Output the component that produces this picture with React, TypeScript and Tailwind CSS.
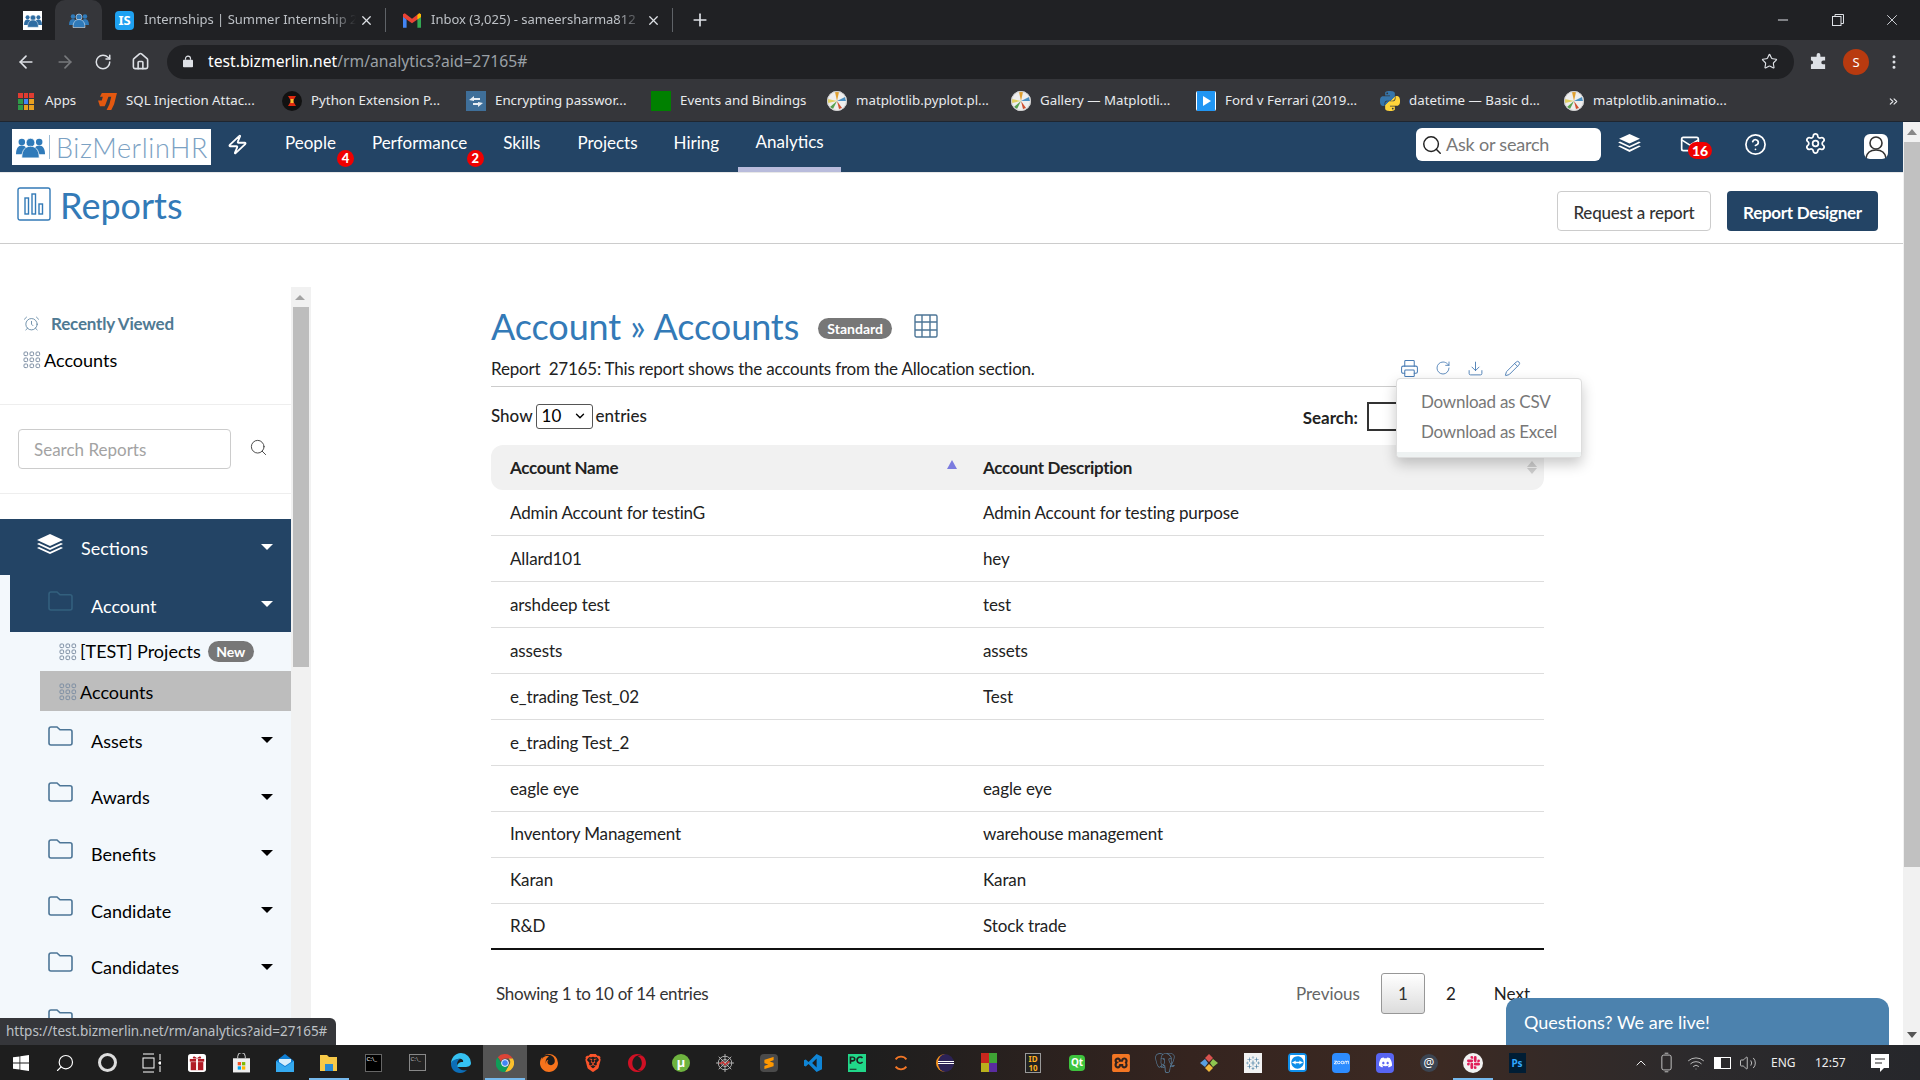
import React from "react";
import { ArrowLeft, ArrowRight, RotateCw, Home, Star, MoreVertical, Search, Zap, Mail, CircleHelp, Settings, Printer, Download, Pencil, X, Plus, Minus, ChevronDown, ChevronUp, ChevronsRight, AlarmClock, Volume2, Wifi } from "lucide-react";
import { SiFirefox, SiBrave, SiOpera, SiSublimetext, SiPycharm, SiPostgresql, SiTableau, SiTeamviewer, SiZoom, SiDiscord, SiSlack, SiXampp, SiPython } from "react-icons/si";

const People = ({ className = "", color = "#2f7ab9" }: { className?: string; color?: string }) => (
  <svg viewBox="0 0 40 32" className={className} fill={color}>
    <circle cx="8" cy="9" r="4.5" /><circle cx="32" cy="9" r="4.5" />
    <path d="M0 26c0-8 3-12 8-12s8 4 8 12z" /><path d="M24 26c0-8 3-12 8-12s8 4 8 12z" />
    <circle cx="20" cy="10" r="6" stroke="#fff" strokeWidth="1" />
    <path d="M8 31c0-11 5-16 12-16s12 5 12 16z" stroke="#fff" strokeWidth="1" />
  </svg>
);

const Matplot = () => (
  <svg viewBox="0 0 20 20" className="w-5 h-5 shrink-0">
    <circle cx="10" cy="10" r="10" fill="#eee" />
    <path d="M10 10L8 1h4z" fill="#e0a030" /><path d="M10 10l8-4 1 4z" fill="#4a90c2" /><path d="M10 10l5 7-3 1z" fill="#d05030" />
    <path d="M10 10l-4 8-3-2z" fill="#58a050" /><path d="M10 10L1 8v4z" fill="#e2d060" />
    <circle cx="10" cy="10" r="9.5" fill="none" stroke="#ccc" />
  </svg>
);

const Dots = () => (
  <svg viewBox="0 0 18 18" className="w-[18px] h-[18px] shrink-0" fill="none" stroke="#7d8ea3" strokeWidth="1">
    {[1, 7, 13].map((x) => [1, 7, 13].map((y) => <rect key={`${x}-${y}`} x={x} y={y} width="3.6" height="3.6" rx="1" />))}
  </svg>
);

const Folder = ({ color = "#4d7697" }: { color?: string }) => (
  <svg viewBox="0 0 25 20" className="block w-[25px] h-[20px] shrink-0" fill="none" stroke={color} strokeWidth="1.6">
    <path d="M1 3.2C1 2 2 1 3 1h6l3 2.8h10c1.2 0 2 .8 2 2V17c0 1.2-.8 2-2 2H3c-1.2 0-2-.8-2-2z" />
  </svg>
);

const Caret = ({ color = "border-t-black" }: { color?: string }) => (
  <span className={`block ml-auto shrink-0 w-0 h-0 border-x-[6px] border-x-transparent border-t-[6px] ${color}`} />
);

const Tab = ({ icon, title, w }: { icon: React.ReactNode; title: string; w: string }) => (
  <div className={`flex items-center h-10 ${w} shrink-0`}>
    {icon}
    <span className="ml-[10px] w-[212px] overflow-hidden whitespace-nowrap text-[13px] text-[#bdc1c6] [mask-image:linear-gradient(to_right,#000_88%,transparent)]">{title}</span>
    <X size={15} className="ml-[3px] text-[#dee1e6] shrink-0" strokeWidth={2} />
    <span className="ml-[11px] w-px h-[24px] bg-[#5f6368]" />
  </div>
);

const Gmail = () => (
  <svg viewBox="0 0 20 16" className="w-[18px] h-[15px] shrink-0">
    <path d="M0 3v13h4V7z" fill="#4285f4" /><path d="M16 7v9h4V3z" fill="#34a853" />
    <path d="M0 1v3l10 7 10-7V1l-2-1-8 6-8-6z" fill="#ea4335" /><path d="M16 2l2-2 2 1v3l-4 3z" fill="#fbbc04" />
  </svg>
);

const bookmarks: { w: string; icon: React.ReactNode; label: string }[] = [
  { w: "w-[184px]", label: "SQL Injection Attac...", icon: <svg viewBox="0 0 20 18" className="w-[19px] h-[17px] shrink-0"><path d="M4 0h16l-3 12-3 6H9l3-6 2-8h-3l-3 8-1 2H2L0 8h4l1-4H2z" fill="#e4580f" /></svg> },
  { w: "w-[184px]", label: "Python Extension P...", icon: <svg viewBox="0 0 20 20" className="w-5 h-5 shrink-0"><circle cx="10" cy="10" r="10" fill="#111" /><path d="M6 5h8l-3 5 3 5H6l3-5z" fill="#e02a10" /><rect x="8.5" y="8" width="3" height="4" fill="#f8c030" /></svg> },
  { w: "w-[185px]", label: "Encrypting passwor...", icon: <svg viewBox="0 0 20 20" className="w-5 h-5 shrink-0"><rect width="20" height="20" fill="#3f6f99" /><path d="M3 9l5-4v2h6v2H8v1zM17 12l-5 4v-2H7v-2h5v-1z" fill="#e8eef3" /></svg> },
  { w: "w-[176px]", label: "Events and Bindings", icon: <span className="w-5 h-5 bg-[#008000] shrink-0" /> },
  { w: "w-[184px]", label: "matplotlib.pyplot.pl...", icon: <Matplot /> },
  { w: "w-[185px]", label: "Gallery — Matplotli...", icon: <Matplot /> },
  { w: "w-[184px]", label: "Ford v Ferrari (2019...", icon: <svg viewBox="0 0 20 20" className="w-5 h-5 shrink-0"><rect width="20" height="20" rx="2" fill="#fff" /><rect x="1" y="0" width="18" height="20" fill="#2196f3" /><path d="M7 5l8 5-8 5z" fill="#fff" /></svg> },
  { w: "w-[184px]", label: "datetime — Basic d...", icon: <SiPython size={20} className="shrink-0 fill-[url(#pygrad)]" /> },
  { w: "w-[280px]", label: "matplotlib.animatio...", icon: <Matplot /> },
];

const navItems: [string, string][] = [
  ["People", "ml-[37px]"], ["Performance", "ml-[36px]"], ["Skills", "ml-[36px]"], ["Projects", "ml-[37px]"], ["Hiring", "ml-[36px]"],
];

const rows: [string, string][] = [
  ["Admin Account for testinG", "Admin Account for testing purpose"], ["Allard101", "hey"], ["arshdeep test", "test"], ["assests", "assets"],
  ["e_trading Test_02", "Test"], ["e_trading Test_2", ""], ["eagle eye", "eagle eye"], ["Inventory Management", "warehouse management"], ["Karan", "Karan"], ["R&D", "Stock trade"],
];

const Slot = ({ children, active = false, open = false }: { children?: React.ReactNode; active?: boolean; open?: boolean }) => (
  <div className={`relative w-[44px] h-[35px] flex items-center justify-center shrink-0 ${active ? "bg-[#555]" : ""}`}>
    {children}
    {(open || active) && <span className="absolute bottom-0 left-[2px] right-[2px] h-[2px] bg-[#76b9ed]" />}
  </div>
);

const ChromeIcon = () => (
  <svg viewBox="0 0 20 20" className="w-[18px] h-[18px]">
    <path d="M10 0a10 10 0 0 1 8.7 5H10a5 5 0 0 0-4.6 3L2 3.5A10 10 0 0 1 10 0z" fill="#db4437" />
    <path d="M18.7 5A10 10 0 0 1 10 20l4.3-7.5A5 5 0 0 0 14 5z" fill="#fbc02d" />
    <path d="M2 3.5l4.3 7.5A5 5 0 0 0 14.3 12.5L10 20A10 10 0 0 1 2 3.5z" fill="#0f9d58" />
    <circle cx="10" cy="10" r="3.8" fill="#4285f4" stroke="#fff" />
  </svg>
);

function Taskbar() {
  return (
    <div className="h-[35px] shrink-0 flex items-center text-white bg-[linear-gradient(90deg,#1e1e1e_0%,#1e1e1e_45%,#35241f_62%,#3c2a23_75%,#2c2a2c_88%,#26272b_100%)] font-['Noto_Sans',sans-serif]">
      <div className="flex -ml-px">
        <Slot><svg viewBox="0 0 16 16" className="w-4 h-4" fill="#fff"><path d="M0 2.3l6.5-.9v6.2H0zM7.3 1.3L16 0v7.6H7.3zM0 8.4h6.5v6.2L0 13.7zM7.3 8.4H16V16l-8.7-1.3z" /></svg></Slot>
        <Slot><Search size={20} strokeWidth={1.4} className="-scale-x-100" /></Slot>
        <Slot><span className="w-[19px] h-[19px] rounded-full border-[3px] border-[#ddd] -ml-[3px]" /></Slot>
        <Slot><svg viewBox="0 0 20 20" className="w-5 h-5 -ml-[5px]" fill="none" stroke="#fff" strokeWidth="1"><path d="M2 1h11M2 19h11M19 1v6M19 13v6" /><rect x="2" y="5" width="11" height="10" /><path d="M18 9h2v2h-2z" fill="#fff" /></svg></Slot>
        <Slot><svg viewBox="0 0 20 20" className="w-[18px] h-5"><rect width="20" height="20" rx="3" fill="#fff" /><path d="M3 9h14v9H3z" fill="#b11a25" /><rect x="2" y="5.5" width="16" height="3" fill="#b11a25" /><path d="M9 5h2v13H9z" fill="#fff" /><path d="M10 5C7 1 4 3 6 5zM10 5c3-4 6-2 4 0z" fill="#b11a25" /></svg></Slot>
        <Slot><svg viewBox="0 0 18 20" className="w-[17px] h-5"><path d="M5 5V3a4 4 0 0 1 8 0v2" fill="none" stroke="#ddd" /><rect y="5" width="18" height="15" fill="#eee" /><rect x="5" y="9" width="3.5" height="3.5" fill="#f25022" /><rect x="9.5" y="9" width="3.5" height="3.5" fill="#7fba00" /><rect x="5" y="13.5" width="3.5" height="3.5" fill="#00a4ef" /><rect x="9.5" y="13.5" width="3.5" height="3.5" fill="#ffb900" /></svg></Slot>
        <Slot><svg viewBox="0 0 18 18" className="w-[18px] h-[18px]"><path d="M0 7l9-7 9 7v11H0z" fill="#0f7ed3" /><path d="M0 7l9 6 9-6v11H0z" fill="#35aaf0" /><path d="M3 5h12v3l-6 4-6-4z" fill="#d6eefc" /></svg></Slot>
        <Slot open><svg viewBox="0 0 18 18" className="w-[18px] h-[18px]"><path d="M0 1h7l2 2h8v14H0z" fill="#f7c948" /><rect x="5" y="10" width="8" height="7" fill="#2a8ad4" /></svg></Slot>
        <Slot><span className="w-[17px] h-[18px] bg-black border border-[#666] text-[6px] leading-[8px] pl-px">C:\_</span></Slot>
        <Slot><span className="w-[17px] h-[17px] bg-[#222] border border-[#888] text-[6px] leading-[8px] pl-px text-[#bbb]">C:\_</span></Slot>
        <Slot><svg viewBox="0 0 20 20" className="w-5 h-5"><path d="M10 0a10 10 0 0 1 10 10c0 3-3 4-6 4H6c0-3 2-5 6-5 1-2-2-4-5-3C3 7 1 9 0 11 0 5 4 0 10 0z" fill="#35c1f1" /><path d="M0 11c0 5 4 9 9 9 3 0 5-1 7-3-5 1-9-1-10-5 0-3 1-5 3-6C5 6 0 7 0 11z" fill="#0c6eb8" /></svg></Slot>
        <Slot active><ChromeIcon /></Slot>
        <Slot><SiFirefox size={18} className="text-[#f7731c]" /></Slot>
        <Slot><SiBrave size={18} className="text-[#fb542b]" /></Slot>
        <Slot><SiOpera size={18} className="text-[#d01024]" /></Slot>
        <Slot><span className="w-[18px] h-[18px] rounded-full bg-[#6eb33f] flex items-center justify-center text-[13px] font-bold leading-none">µ</span></Slot>
        <Slot><svg viewBox="0 0 20 20" className="w-[18px] h-[18px]" fill="none" stroke="#bbb"><path d="M10 0v20M0 10h20M3 3l14 14M17 3L3 17" /><circle cx="10" cy="10" r="4" /><circle cx="10" cy="10" r="7.5" /><path d="M4 11l4-2 2 3 5-4" stroke="#d03030" strokeWidth="1.5" /></svg></Slot>
        <Slot><span className="w-[18px] h-[18px] bg-[#4a4a4a] rounded-sm flex items-center justify-center"><SiSublimetext size={12} className="text-[#ff9800]" /></span></Slot>
        <Slot><svg viewBox="0 0 20 20" className="w-[18px] h-[18px]"><path d="M14 0l6 3v14l-6 3L5 11l-3 3-2-1V7l2-1 3 3z" fill="#0f85d6" /><path d="M14 5l-5 5 5 5z" fill="#1e1e1e" /></svg></Slot>
        <Slot><SiPycharm size={18} className="text-[#21d789]" /></Slot>
        <Slot><svg viewBox="0 0 20 20" className="w-[18px] h-[18px]" fill="none" stroke="#f37626" strokeWidth="2"><path d="M4 6c3-4 9-4 12 0M4 14c3 4 9 4 12 0" /></svg></Slot>
        <Slot><span className="w-[18px] h-[18px] rounded-full bg-[#2c2255] border-l-2 border-[#f7941e] flex flex-col justify-center gap-px"><span className="h-px bg-white" /><span className="h-px bg-white" /></span></Slot>
        <Slot><span className="grid grid-cols-2 w-[16px] h-[19px]"><span className="bg-[#c8281e]" /><span className="bg-[#3fa535]" /><span className="bg-[#b9b01c]" /><span className="bg-[#5a2ca0]" /></span></Slot>
        <Slot><span className="w-[16px] h-[20px] bg-[#222] border border-[#999] text-[8px] leading-[9px] text-center font-bold text-[#ffb020]">ID<br />10</span></Slot>
        <Slot><span className="w-[16px] h-[16px] rounded-sm bg-[#3ec43e] text-[10px] leading-[15px] text-center font-bold">Qt</span></Slot>
        <Slot><SiXampp size={18} className="text-[#f37623]" /></Slot>
        <Slot><SiPostgresql size={20} className="text-[#5d87a8]" /></Slot>
        <Slot><svg viewBox="0 0 18 18" className="w-[18px] h-[18px]"><path d="M9 0l4 4-4 4-4-4z" fill="#d9534f" /><path d="M13 5l5 4-5 4-3-4z" fill="#8fc54f" /><path d="M5 5l3 4-3 4-5-4z" fill="#5aa0e0" /><path d="M9 10l4 4-4 4-4-4z" fill="#f0b83c" /></svg></Slot>
        <Slot><span className="w-[18px] h-[20px] bg-[#f2f2f2] flex items-center justify-center"><SiTableau size={14} className="text-[#38749d]" /></span></Slot>
        <Slot><span className="w-[19px] h-[19px] rounded bg-[#0e8ee9] flex items-center justify-center"><SiTeamviewer size={15} className="text-white" /></span></Slot>
        <Slot><span className="w-[18px] h-[20px] rounded bg-[#2d8cff] flex items-center justify-center"><SiZoom size={15} className="text-white" /></span></Slot>
        <Slot><span className="w-[18px] h-[20px] rounded bg-[#5865f2] flex items-center justify-center"><SiDiscord size={13} className="text-white" /></span></Slot>
        <Slot><span className="w-[18px] h-[18px] rounded-full bg-[#3c4552] text-[12px] leading-[17px] text-center">@</span></Slot>
        <Slot open><span className="w-[20px] h-[20px] rounded-full bg-[#f2f2f2] flex items-center justify-center"><SiSlack size={13} className="text-[#e01e5a]" /></span></Slot>
        <Slot><span className="w-[17px] h-[20px] bg-[#001d34] text-[#31a8ff] text-[10px] leading-[20px] text-center font-bold">Ps</span></Slot>
      </div>
      <div className="ml-auto flex items-center h-full text-[#eee]">
        <ChevronUp size={16} strokeWidth={1.5} className="mr-[11px]" />
        <svg viewBox="0 0 14 22" className="w-[13px] h-[21px] mr-[14px]" fill="none" stroke="#ccc"><rect x="2" y="3" width="10" height="16" rx="2" /><path d="M5 1h4M5 21h4" /></svg>
        <Wifi size={18} strokeWidth={1.3} className="mr-[9px] text-[#bbb]" />
        <span className="w-[17px] h-[12px] border border-white mr-[8px] flex"><span className="w-[6px] bg-white" /></span>
        <Volume2 size={18} strokeWidth={1.2} className="mr-[14px] text-[#ccc]" />
        <span className="text-[12px] w-[35px] mr-[9px]">ENG</span>
        <span className="text-[12px] w-[36px]">12:57</span>
        <svg viewBox="0 0 18 18" className="ml-[20px] mr-[31px] w-[18px] h-[18px]" fill="#fff"><path d="M0 0h18v14h-5l-4 4v-4H0z" /><path d="M4 5h10M4 9h7" stroke="#222" /></svg>
      </div>
    </div>
  );
}

function ChromeBar() {
  return (
    <div className="font-['Noto_Sans',sans-serif] shrink-0">
      <div className="h-10 bg-[#202124] flex items-center relative">
        <span className="ml-[23px] w-[19px] h-[19px] bg-white flex items-center justify-center shrink-0"><People className="w-[18px] h-[15px]" color="#2f6da3" /></span>
        <span className="ml-[13px] w-[47px] h-10 bg-[#35363a] rounded-t-[10px] flex items-center justify-center shrink-0"><People className="w-[20px] h-[16px]" /></span>
        <span className="w-[13px] shrink-0" />
        <Tab w="w-[273px]" title="Internships | Summer Internship 2" icon={<span className="w-[19px] h-[19px] bg-[#1ea1f1] rounded-sm text-white text-[13px] font-bold leading-[19px] text-center shrink-0">IS</span>} />
        <Tab w="w-[287px]" title="Inbox (3,025) - sameersharma812" icon={<span className="ml-[15px] flex"><Gmail /></span>} />
        <Plus size={20} className="ml-[15px] text-[#dee1e6]" strokeWidth={2} />
        <div className="ml-auto flex items-center text-[#dee1e6] mr-[19px]">
          <Minus size={16} strokeWidth={1.5} />
          <svg viewBox="0 0 12 12" className="w-3 h-3 ml-[41px]" fill="none" stroke="#dee1e6"><rect x=".5" y="2.5" width="8.5" height="9" /><path d="M3 2.5V.5h8.5v9H9" /></svg>
          <X size={18} strokeWidth={1.2} className="ml-[39px]" />
        </div>
      </div>
      <div className="h-[41px] bg-[#35363a] flex items-center text-[#dee1e6] pt-[2px]">
        <ArrowLeft size={20} className="ml-4" />
        <ArrowRight size={20} className="ml-[19px] text-[#77797c]" />
        <RotateCw size={18} className="ml-[19px]" />
        <Home size={19} className="ml-[19px]" />
        <div className="ml-[17px] flex-1 h-[34px] rounded-full bg-[#202124] flex items-center">
          <svg viewBox="0 0 12 14" className="ml-4 w-[10px] h-[13px]" fill="#dee1e6"><rect y="5" width="12" height="9" rx="1" /><path d="M3 5V3.5a3 3 0 0 1 6 0V5" fill="none" stroke="#dee1e6" strokeWidth="1.4" /></svg>
          <span className="ml-[15px] text-[15.7px] text-white">test.bizmerlin.net<span className="text-[#9aa0a6]">/rm/analytics?aid=27165#</span></span>
          <Star size={17} className="ml-auto mr-[16px]" strokeWidth={1.6} />
        </div>
        <svg viewBox="0 0 18 18" className="ml-[16px] w-[17px] h-[17px]" fill="#dee1e6"><path d="M7 2a2 2 0 0 1 4 0v2h5v4h-2a2 2 0 0 0 0 4h2v5H1v-5h1a2.2 2.2 0 0 0 0-4H1V4h6z" /></svg>
        <span className="ml-[16px] w-[26px] h-[26px] rounded-full bg-[#b83a0f] text-white text-[13px] leading-[26px] text-center">S</span>
        <MoreVertical size={18} className="ml-[16px] mr-[17px]" />
      </div>
      <div className="h-[41px] bg-[#35363a] border-b border-[#1f2630] flex items-center text-[13.3px] text-[#e8eaed] whitespace-nowrap">
        <span className="ml-[18px] w-4 h-[17px] grid grid-cols-3 gap-px shrink-0">
          {["#e03c31", "#e03c31", "#e03c31", "#2e9b47", "#4285f4", "#e8a020", "#2e9b47", "#e8a020", "#e8a020"].map((c, i) => (
            <span key={i} className={c === "#e03c31" ? "bg-[#e03c31]" : c === "#2e9b47" ? "bg-[#2e9b47]" : c === "#4285f4" ? "bg-[#4285f4]" : "bg-[#e8a020]"} />
          ))}
        </span>
        <span className="ml-[11px] w-[53px]">Apps</span>
        {bookmarks.map((b) => (
          <div key={b.label} className={`flex items-center shrink-0 ${b.w}`}>{b.icon}<span className="ml-[9px]">{b.label}</span></div>
        ))}
        <ChevronsRight size={13} className="ml-auto mr-5" />
      </div>
    </div>
  );
}

function NavBar() {
  return (
    <div className="h-[50px] bg-[#234465] flex items-center text-white text-[17px] shrink-0">
      <div className="ml-3 w-[199px] h-9 bg-white flex items-center pl-1 shrink-0 overflow-hidden">
        <People className="w-[29px] h-[24px] shrink-0" />
        <span className="ml-[4px] w-px h-[24px] bg-[#9dbcd6] shrink-0" />
        <span className="ml-[6px] text-[27px] leading-none font-light tracking-[.6px] text-[#7ba1c3] whitespace-nowrap">BizMerlinHR</span>
      </div>
      <Zap size={21} className="ml-[16px] -mt-[6px] -skew-x-6" strokeWidth={2.2} />
      {navItems.map(([n, m]) => (
        <span key={n} className={`relative ${m} mb-[8px]`}>
          {n}
          {n === "People" && <span className="absolute left-[52px] top-[20px] w-[17px] h-[17px] rounded-full bg-[#f00000] text-[13px] font-black leading-[17px] text-center">4</span>}
          {n === "Performance" && <span className="absolute left-[95px] top-[20px] w-[17px] h-[17px] rounded-full bg-[#f00000] text-[13px] font-black leading-[17px] text-center">2</span>}
        </span>
      ))}
      <span className="ml-[19px] w-[103px] h-[50px] flex items-center justify-center border-b-[5px] border-[#b9bcdc] pb-[5px]">Analytics</span>
      <div className="ml-auto mb-[5px] w-[185px] h-[33px] bg-white rounded-md flex items-center pl-[5px] text-[#777] text-[18px]">
        <Search size={22} className="text-[#222]" strokeWidth={1.6} />
        <span className="ml-[3px] tracking-[-.2px]">Ask or search</span>
      </div>
      <div className="w-[302px] flex items-center h-full shrink-0">
        <svg viewBox="0 0 24 20" className="ml-[17px] w-[23px] h-[19px] -mt-[8px]" fill="#fff"><path d="M12 0l11 5-11 5L1 5z" /><path d="M2 8l10 4.6L22 8l2 1-12 5.5L0 9z" /><path d="M2 12l10 4.6L22 12l2 1-12 6L0 13z" /></svg>
        <span className="relative ml-[39px] -mt-[6px]">
          <Mail size={20} strokeWidth={2} />
          <span className="absolute left-[8px] top-[8px] w-[24px] h-[17px] rounded-full bg-[#f00000] text-[14px] font-black leading-[17px] text-center">16</span>
        </span>
        <CircleHelp size={23} strokeWidth={1.8} className="ml-[44px] -mt-[6px]" />
        <Settings size={23} strokeWidth={1.8} className="ml-[37px] -mt-[8px]" />
        <span className="ml-[37px] w-[24px] h-[25px] rounded-md bg-white flex items-center justify-center -mt-[2px] overflow-hidden">
          <svg viewBox="0 0 24 25" className="w-6 h-[25px]" fill="none" stroke="#333" strokeWidth="1.6"><circle cx="12" cy="9" r="6" /><path d="M2 24c1-6 5-8 10-8s9 2 10 8" /></svg>
        </span>
      </div>
    </div>
  );
}

function Sidebar() {
  return (
    <div className="w-[311px] mt-[43px] flex shrink-0">
      <div className="w-[291px] flex flex-col">
        <div className="mt-[16px] h-10 flex items-center pl-[23px]">
          <AlarmClock size={17} strokeWidth={1.1} className="text-[#4d7697]" />
          <span className="ml-[11px] text-[#4f7a93] font-bold text-[17px] tracking-[-.2px] pt-[1px]">Recently Viewed</span>
        </div>
        <div className="h-8 flex items-center pl-[23px] text-[18px] text-black pt-[2px]"><Dots /><span className="ml-[3px]">Accounts</span></div>
        <div className="mt-[29px] h-px bg-[#eee]" />
        <div className="mt-[24px] flex items-center pl-[18px]">
          <div className="w-[213px] h-[40px] border border-[#ccc] rounded flex items-center pl-[15px] pt-[2px] text-[17px] text-[#a3a3a3]">Search Reports</div>
          <Search size={19} strokeWidth={1.2} className="ml-[18px] -mt-[4px] text-[#444]" />
        </div>
        <div className="mt-[24px] h-px bg-[#eee]" />
        <div className="mt-[25px] flex-1 bg-[#f3f8fc] overflow-hidden text-[18px] text-black">
          <div className="h-[56px] bg-[#234465] flex items-center pl-[37px] pr-[18px] text-white">
            <svg viewBox="0 0 26 20" className="w-[26px] h-[20px] -mt-[6px]" fill="#fff"><path d="M13 0l13 6-13 6L0 6z" /><path d="M2 9l11 5 11-5 2 1-13 6L0 10z" /><path d="M2 13l11 5 11-5 2 1-13 6L0 14z" /></svg>
            <span className="ml-[18px] pt-[3px]">Sections</span>
            <Caret color="border-t-white" />
          </div>
          <div className="ml-[10px] h-[57px] bg-[#234465] flex items-center pl-[38px] pr-[18px] text-white">
            <span className="-mt-[6px]"><Folder color="#33607e" /></span>
            <span className="ml-[18px] pt-[5px]">Account</span>
            <Caret color="border-t-white" />
          </div>
          <div className="h-[39px] flex items-center pl-[59px]">
            <Dots /><span className="ml-[3px]">[TEST] Projects</span>
            <span className="ml-[7px] h-[21px] w-[46px] rounded-full bg-[#777] text-white text-[14px] font-bold leading-[21px] text-center">New</span>
          </div>
          <div className="ml-[40px] h-[40px] bg-[#bdbdbd] flex items-center pl-[19px] pt-[2px]"><Dots /><span className="ml-[3px]">Accounts</span></div>
          <div className="h-px" />
          {["Assets", "Awards", "Benefits", "Candidate", "Candidates", ""].map((n) => (
            <div key={n} className="h-[56.6px] flex items-center pl-[48px] pr-[18px]">
              <span className="-mt-[9px]"><Folder /></span>
              <span className="ml-[18px] pt-[2px]">{n}</span>
              {n && <Caret />}
            </div>
          ))}
        </div>
      </div>
      <div className="w-[20px] pl-0 pr-[2px] flex flex-col bg-[#f1f1f1]">
        <div className="h-[20px] flex items-center justify-center"><span className="w-0 h-0 border-x-[5px] border-x-transparent border-b-[5px] border-b-[#a3a3a3]" /></div>
        <div className="ml-[2px] h-[360px] bg-[#bdbdbd]" />
      </div>
    </div>
  );
}

function MainPanel() {
  return (
    <div className="ml-[180px] w-[1053px] pt-[60px] relative shrink-0">
      <div className="h-[44px] flex items-center text-[#337ab7]">
        <h1 className="text-[36px] leading-none tracking-[-.1px] whitespace-nowrap">Account » Accounts</h1>
        <span className="ml-[19px] mt-[5px] h-[21px] w-[74px] rounded-full bg-[#777] text-white text-[14px] font-bold leading-[21px] text-center">Standard</span>
        <svg viewBox="0 0 24 24" className="ml-[22px] w-6 h-6" fill="none" stroke="#4d7697" strokeWidth="1.4"><rect x="1" y="1" width="22" height="22" rx="1.5" /><path d="M8 1v22M16 1v22M1 8h22M1 16h22" /></svg>
      </div>
      <div className="h-[39px] pt-[4px] border-b border-[#ccc] flex items-center text-[17px] text-[#222]">
        <span className="whitespace-pre tracking-[-.2px]">Report  27165: This report shows the accounts from the Allocation section.</span>
        <div className="ml-auto mr-[23px] flex items-center text-[#4a7db5] -mt-[2px]">
          <Printer size={19} strokeWidth={1.3} />
          <RotateCw size={16} strokeWidth={1.3} className="ml-[16px]" />
          <Download size={17} strokeWidth={1.3} className="ml-[16px]" />
          <Pencil size={17} strokeWidth={1.3} className="ml-[20px]" />
        </div>
      </div>
      <div className="h-[58px] flex items-center text-[17px] text-[#222]">
        <span className="font-medium">Show</span>
        <span className="ml-[3px] w-[57px] h-[25px] border border-[#555] rounded-[3px] flex items-center pl-[5px] text-black">10<ChevronDown size={14} strokeWidth={2.4} className="ml-auto mr-[5px]" /></span>
        <span className="ml-[3px] font-medium">entries</span>
        <span className="ml-auto font-bold pt-[4px]">Search:</span>
        <span className="ml-[9px] w-[177px] h-[29px] border-2 border-[#333] border-r-0" />
      </div>
      <table className="w-full table-fixed border-collapse text-[17px] text-[#222]">
        <thead>
          <tr className="h-[45px]">
            <th className="relative w-[475px] pl-[19px] text-left font-bold tracking-[-.3px] bg-[#f1f1f1] rounded-l-[12px]">
              Account Name
              <span className="absolute left-[456px] top-[15px] w-0 h-0 border-x-[5px] border-x-transparent border-b-[9px] border-b-[#7b7bdf]" />
            </th>
            <th className="relative pl-[17px] text-left font-bold tracking-[-.3px] bg-[#f1f1f1] rounded-r-[12px]">
              Account Description
              <span className="absolute right-[7px] top-[16px] w-0 h-0 border-x-[5px] border-x-transparent border-b-[6px] border-b-[#ccc]" />
              <span className="absolute right-[7px] top-[23px] w-0 h-0 border-x-[5px] border-x-transparent border-t-[6px] border-t-[#ccc]" />
            </th>
          </tr>
        </thead>
        <tbody>
          {rows.map(([a, b], i) => (
            <tr key={a} className={`h-[45.9px] border-b tracking-[-.12px] ${i === rows.length - 1 ? "border-b-2 border-[#111]" : "border-[#ddd]"}`}>
              <td className="pl-[19px]">{a}</td>
              <td className="pl-[17px]">{b}</td>
            </tr>
          ))}
        </tbody>
      </table>
      <div className="h-[88px] flex items-center text-[17px] text-[#333]">
        <span className="ml-[5px] tracking-[-.3px]">Showing 1 to 10 of 14 entries</span>
        <span className="ml-auto text-[#666]">Previous</span>
        <span className="ml-[21px] w-[44px] h-[41px] rounded-[3px] border border-[#979797] bg-[linear-gradient(#fff,#dcdcdc)] text-center leading-[40px]">1</span>
        <span className="ml-[21px] text-[#222]">2</span>
        <span className="ml-[38px] mr-[14px] text-[#222]">Next</span>
      </div>
      <div className="absolute left-[905px] top-[134px] w-[186px] h-[80px] bg-white rounded border border-[#ddd] shadow-[0_6px_14px_rgba(0,0,0,.22)] overflow-hidden text-[17px] tracking-[-.25px] text-[#777] flex flex-col pl-[24px]">
        <span className="mt-[10px] leading-[25px]">Download as CSV</span>
        <span className="mt-[5px] leading-[25px]">Download as Excel</span>
        <span className="absolute left-0 right-0 bottom-0 h-[5px] bg-[#eef2f2]" />
      </div>
    </div>
  );
}

export default function App() {
  return (
    <div className="relative w-[1920px] h-screen overflow-hidden flex flex-col bg-white font-['Lato',sans-serif]">
      <svg className="absolute w-0 h-0">
        <defs>
          <linearGradient id="pygrad" x1="0" y1="0" x2="1" y2="1">
            <stop offset="50%" stopColor="#3776ab" /><stop offset="50%" stopColor="#ffd43b" />
          </linearGradient>
        </defs>
      </svg>
      <ChromeBar />
      <div className="flex-1 min-h-0 flex">
        <div className="w-[1903px] flex flex-col overflow-hidden">
          <NavBar />
          <div className="h-[72px] shrink-0 border-t border-[#e8e8e8] border-b border-b-[#ccc] flex items-center">
            <svg viewBox="0 0 34 34" className="ml-[17px] w-[34px] h-[34px] -mt-[8px]" fill="none" stroke="#337ab7" strokeWidth="1.4"><rect x="1" y="1" width="32" height="32" rx="2" /><rect x="8" y="11" width="3.5" height="16" /><rect x="15" y="7" width="3.5" height="20" /><rect x="22" y="17" width="3.5" height="10" /></svg>
            <span className="ml-[9px] text-[36px] leading-none text-[#337ab7] -mt-[6px]">Reports</span>
            <span className="ml-auto mt-[6px] w-[154px] h-10 rounded border border-[#ccc] text-[17px] font-medium text-[#333] text-center leading-[42px] tracking-[-.2px]">Request a report</span>
            <span className="ml-4 mt-[6px] mr-[25px] w-[151px] h-10 rounded bg-[#234465] text-[17px] font-bold text-white text-center leading-[44px] tracking-[-.3px]">Report Designer</span>
          </div>
          <div className="flex-1 min-h-0 flex">
            <Sidebar />
            <MainPanel />
          </div>
        </div>
        <div className="w-[17px] bg-[#f1f1f1] flex flex-col items-center">
          <div className="h-[20px] flex items-center"><span className="w-0 h-0 border-x-[5px] border-x-transparent border-b-[6px] border-b-[#888]" /></div>
          <div className="w-4 ml-px h-[725px] bg-[#c1c1c1]" />
          <div className="mt-auto h-[20px] flex items-center"><span className="w-0 h-0 border-x-[5px] border-x-transparent border-t-[6px] border-t-[#555]" /></div>
        </div>
      </div>
      <Taskbar />
      <div className="absolute left-0 top-[1018px] w-[336px] h-[27px] bg-[#35363a] rounded-tr-md text-[13.5px] leading-[27px] pl-[6px] text-[#bdc1c6] font-['Noto_Sans',sans-serif] whitespace-nowrap">https://test.bizmerlin.net/rm/analytics?aid=27165#</div>
      <div className="absolute left-[1506px] top-[998px] w-[383px] h-[47px] bg-[#4c82ae] rounded-t-xl text-white text-[18px] leading-[49px] pl-[18px]">Questions? We are live!</div>
    </div>
  );
}
